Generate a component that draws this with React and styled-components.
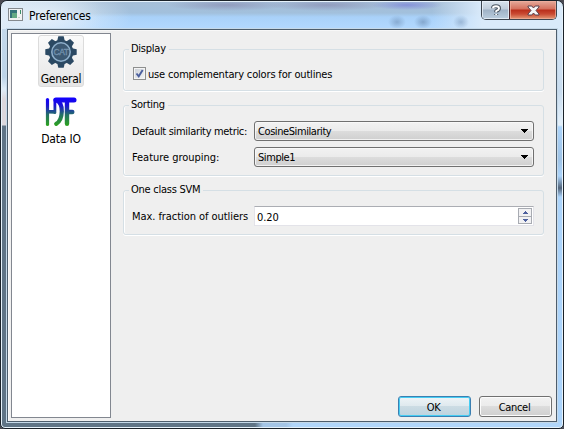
import React from 'react';
import styled, { createGlobalStyle, css } from 'styled-components';

const Global = createGlobalStyle`
  * { box-sizing: border-box; }
  body { margin: 0; background: #4a4a52; overflow: hidden; }
  button { font: inherit; color: inherit; padding: 0; margin: 0; }
`;

const Window = styled.div`
  width: 564px;
  height: 429px;
  display: flex;
  flex-direction: column;
  padding: 0 6px 6px 6px;
  font: 11px/14px 'DejaVu Sans Condensed', 'DejaVu Sans', sans-serif;
  font-stretch: condensed;
  letter-spacing: -0.2px;
  color: #000;
  border: 1px solid #1b2229;
  border-radius: 7px 7px 5px 5px;
  box-shadow: inset 0 0 0 1px #e6f2fb;
  background:
    linear-gradient(90deg, #5f7486 0 254px, #a4c5e6 262px, #a4c5e6 285px, #b1d6fa 292px) 0 100% / 100% 6px no-repeat,
    linear-gradient(180deg, #c9dced 0, #bdd4e8 76px, #dfedf8 88px, #dcd8dd 98px, #dcd8dd 124px, #5f7486 125px) 0 0 / 7px 100% no-repeat,
    linear-gradient(180deg, #dcecfb 0, #c8dcef 90px, #e4f0fa 124px, #acd4fb 126px, #9fc3e6 158px, #acd4fb 175px, #52647a 187px, #acd4fb 196px) 100% 0 / 7px 100% no-repeat,
    #b1d6fa;
`;

const TitleBar = styled.header`
  height: 28px;
  flex: none;
  display: flex;
  align-items: flex-start;
  margin: 0 -5px;
  padding-left: 6px;
  border-top: 1px solid #e6f2fb;
  border-radius: 6px 6px 0 0;
  background:
    radial-gradient(ellipse 85px 30px at 45px 14px, #eaf3fbd9, #eaf3fb00),
    radial-gradient(ellipse 36px 5px at 405px 3px, #777ed8b0, #777ed800),
    radial-gradient(ellipse 9px 7px at 395px 20px, #6989af88, #6989af00),
    radial-gradient(ellipse 9px 7px at 421px 20px, #6989af99, #6989af00),
    radial-gradient(ellipse 8px 7px at 459px 20px, #6989af77, #6989af00),
    radial-gradient(ellipse 60px 6px at 225px 3px, #817fa88c, #817fa800),
    radial-gradient(ellipse 60px 6px at 325px 3px, #817fa88c, #817fa800),
    linear-gradient(90deg, #d8e7f4 0, transparent 100px, transparent 430px, #d9eafa 480px),
    linear-gradient(180deg, #a6bfd8 0, #a2c0dc 11px, #a9d1f9 15px, #b2d8fe 27px);
`;

const Title = styled.h1`
  flex: 1;
  margin: 7px 0 0 6px;
  font-size: 12px;
  font-weight: 400;
  line-height: 14px;
  letter-spacing: -0.15px;
`;

const AppIcon = styled.svg`
  width: 15px;
  height: 13px;
  margin-top: 6px;
`;

const CaptionButtons = styled.div`
  display: flex;
  height: 19px;
  margin: -1px 5px 0 0;
  border: 1px solid #3d4650;
  border-top: 0;
  border-radius: 0 0 5px 5px;
  overflow: hidden;
`;

const CaptionButton = styled.button`
  width: ${p => (p.$close ? 47 : 27)}px;
  border: 0;
  display: grid;
  place-items: center;
  box-shadow: inset 0 0 0 1px ${p => (p.$close ? '#f0b1a0b0' : '#eef5fbc0')};
  background: ${p => p.$close
    ? 'linear-gradient(#e5aa9b 0, #d5705d 8px, #b92e1b 9px, #c94a33 13px, #de8a69 17px)'
    : 'linear-gradient(#d9e4ee 0, #c0cddb 8px, #9fb2c6 9px, #b8cbdc 17px)'};
  & + & { border-left: 1px solid #4b2025; }
`;

const Client = styled.main`
  flex: 1;
  min-height: 0;
  display: flex;
  gap: 12px;
  margin: 0;
  padding: 3px;
  border: 1px solid #4d5d6c;
  background: #efefef;
  box-shadow: inset 1px 1px 0 #f8f8f8, 0 0 0 1px #c5d9e9;
`;

const PageList = styled.nav`
  width: 100px;
  height: 385px;
  flex: none;
  border: 1px solid #828790;
  background: #fff;
  display: flex;
  flex-direction: column;
  align-items: center;
  padding: 1px 0 0 0;
  gap: 8px;
`;

const PageItem = styled.button`
  width: 46px;
  height: 52px;
  border: 1px solid ${p => (p.$selected ? '#dcdcdc' : 'transparent')};
  border-radius: 3px;
  background: ${p => (p.$selected ? 'linear-gradient(#fafafa, #e6e6e6)' : 'none')};
  display: flex;
  flex-direction: column;
  align-items: center;
  gap: 4px;
  font-size: 12px;
  letter-spacing: ${p => p.$spacing}px;
  white-space: nowrap;
  svg { flex: none; }
`;

const Content = styled.section`
  flex: 1;
  display: flex;
  flex-direction: column;
  padding: 9px 9px 0 0;
`;

const Group = styled.fieldset`
  margin: 0 0 ${p => p.$gap}px;
  min-width: 0;
  height: ${p => p.$height}px;
  border: 1px solid #d5dfe5;
  border-radius: 3px;
  padding: ${p => p.$top}px 8px 0 8px;
  box-shadow: inset 1px 0 0 #fff, 0 1px 0 #fff;
`;

const GroupTitle = styled.legend`
  padding: 0 3px 0 2px;
  margin-left: -3px;
  height: 14px;
  letter-spacing: -0.25px;
`;

const CheckRow = styled.label`
  display: flex;
  align-items: center;
  gap: 2px;
  white-space: nowrap;
  letter-spacing: -0.17px;
`;

const CheckText = styled.span`
  padding-top: 2px;
  margin-bottom: -1px;
`;

const CheckBox = styled.span`
  width: 13px;
  height: 13px;
  margin-left: 1px;
  border: 1px solid #8e8f8f;
  background: linear-gradient(135deg, #c9ced6, #f6f6f6);
  box-shadow: inset 0 0 0 1px #f4f4f4;
  display: grid;
  place-items: center;
`;

const Form = styled.div`
  display: grid;
  grid-template-columns: 122px 280px;
  row-gap: 6px;
  align-items: center;
`;

const Label = styled.span`
  white-space: nowrap;
  padding-top: 1px;
  letter-spacing: ${p => p.$spacing}px;
`;

const field = css`
  height: 20px;
  display: flex;
  align-items: center;
`;

const Combo = styled.button`
  ${field}
  justify-content: space-between;
  padding: 0 5px 0 3px;
  letter-spacing: -0.42px;
  border: 1px solid #707070;
  border-radius: 3px;
  background: linear-gradient(#f2f2f2 0, #ebebeb 9px, #dddddd 9px, #cfcfcf 18px);
  box-shadow: inset 0 0 0 1px #fafafacc;
`;

const ComboText = styled.span`
  padding-top: 1px;
`;

const Spin = styled.div`
  ${field}
  justify-content: space-between;
  padding: 0 1px 0 2px;
  border: 1px solid #e3e3e9;
  border-top-color: #abadb3;
  background: #fff;
`;

const SpinValue = styled.span`
  padding-top: 3px;
  letter-spacing: -0.1px;
`;

const Arrows = styled.div`
  width: 14px;
  height: 16px;
  display: grid;
  grid-template-rows: 1fr 1fr;
  border: 1px solid #a8abb2;
  background: #f1f1f3;
`;

const Arrow = styled.span`
  display: grid;
  place-items: center;
  & + & { border-top: 1px solid #a8abb2; }
`;

const Footer = styled.footer`
  display: flex;
  justify-content: flex-end;
  gap: 8px;
  margin: auto -8px 1px 0;
`;

const PushButton = styled.button`
  width: 73px;
  height: 21px;
  padding: 2px 2px 0 0;
  letter-spacing: -0.3px;
  border: 1px solid ${p => (p.$primary ? '#3c7fb1' : '#707070')};
  border-radius: 3px;
  background: ${p => p.$primary
    ? 'linear-gradient(#eef4f7 0, #dfe9ee 9px, #ccdce4 9px, #bdd3df 19px)'
    : 'linear-gradient(#f2f2f2 0, #ebebeb 9px, #dddddd 9px, #cfcfcf 19px)'};
  box-shadow: inset 0 0 0 1px ${p => (p.$primary ? '#46cdf3' : '#fcfcfc')};
`;

function DropArrow() {
  return <svg width="7" height="4" shapeRendering="crispEdges"><path d="M0 0h7v1H6v1H5v1H4v1H3V3H2V2H1V1H0z" /></svg>;
}

function GearIcon() {
  const teeth = [0, 45, 90, 135, 180, 225, 270, 315];
  return (
    <svg width="32" height="32" viewBox="0 0 32 32">
      <circle cx="16" cy="16" r="12.3" fill="#2b4963" />
      {teeth.map(a => <path key={a} d="M12.2 5 13.3.3h5.4L19.8 5z" fill="#2b4963" transform={`rotate(${a} 16 16)`} />)}
      <circle cx="16" cy="16" r="9.2" fill="#3c5973" stroke="#8fb0cc" strokeWidth="1.5" />
      <text x="16" y="19.2" textAnchor="middle" fontSize="8.5" fontFamily="Liberation Sans, sans-serif" letterSpacing="-.5" fill="#6485a2" stroke="#7896b1" strokeWidth=".35">CAT</text>
    </svg>
  );
}

function HdfIcon() {
  return (
    <svg width="32" height="32" viewBox="0 0 32 32">
      <defs>
        <linearGradient id="hdf" gradientUnits="userSpaceOnUse" x1="0" y1="2" x2="0" y2="30">
          <stop offset="0" stopColor="#1200ff" />
          <stop offset=".25" stopColor="#1a10d8" />
          <stop offset=".6" stopColor="#237066" />
          <stop offset="1" stopColor="#2da51b" />
        </linearGradient>
      </defs>
      <g fill="none" stroke="url(#hdf)" strokeLinecap="round" strokeLinejoin="round">
        <path d="M2.5 3.5V28.5" strokeWidth="3.2" />
        <path d="M3 15.8 10 15.9" strokeWidth="3.6" strokeLinecap="butt" />
        <path d="M9.9 3.7v13" strokeWidth="2.8" />
        <path d="M12 4.5Q17 7 16.8 15.5 16.5 25 11.2 27.8" strokeWidth="4.2" />
        <path d="M10.9 4.1H29" strokeWidth="5" />
        <path d="M22 5V27.8" strokeWidth="4.4" />
        <path d="M22 16H27.3" strokeWidth="4.4" />
      </g>
    </svg>
  );
}

export default function App() {
  return (
    <>
      <Global />
      <Window>
        <TitleBar>
          <AppIcon viewBox="0 0 15 13" shapeRendering="crispEdges">
            <path fill="#858a8e" d="M0 0h15v13H0z" />
            <path fill="#f1f3f3" d="M1 1h13v11H1z" />
            <path fill="#35747b" d="M2 2h7v8H2z" />
            <path fill="#64aa84" d="M4 5h5v5H4z" />
            <path fill="#c7cecb" d="M10 9h2v1h-2z" />
            <path fill="#3c9069" d="M12 2h1v4h-1z" />
          </AppIcon>
          <Title>Preferences</Title>
          <CaptionButtons>
            <CaptionButton aria-label="Help">
              <svg width="12" height="13" viewBox="0 0 12 13">
                <g fill="none" strokeLinejoin="round">
                  <path d="M3 4.2Q3 2.3 6 2.3 9 2.3 9 4.4 9 5.8 6.2 7v1.3M6.2 10v1" stroke="#4d5864" strokeWidth="4" />
                  <path d="M3 4.2Q3 2.3 6 2.3 9 2.3 9 4.4 9 5.8 6.2 7v1.3M6.2 10v1" stroke="#fff" strokeWidth="1.9" />
                </g>
              </svg>
            </CaptionButton>
            <CaptionButton $close aria-label="Close">
              <svg width="13" height="11" viewBox="0 0 13 11">
                <path d="M1 1h3.8l1.7 2L8.2 1H12v1L9 5.5l3 3.5v1H8.2L6.5 8l-1.7 2H1V9l3-3.5L1 2z" fill="#f5f5f5" stroke="#593f4b" />
              </svg>
            </CaptionButton>
          </CaptionButtons>
        </TitleBar>
        <Client>
          <PageList>
            <PageItem $selected $spacing={-0.3}><GearIcon />General</PageItem>
            <PageItem $spacing={-0.2}><HdfIcon />Data IO</PageItem>
          </PageList>
          <Content>
            <Group $height={49} $gap={7} $top={10}>
              <GroupTitle>Display</GroupTitle>
              <CheckRow>
                <CheckBox>
                  <svg width="9" height="9"><path d="M1.5 4.5 3.7 7.3 7.7 1" fill="none" stroke="#4b5f9e" strokeWidth="1.9" /></svg>
                </CheckBox>
                <CheckText>use complementary colors for outlines</CheckText>
              </CheckRow>
            </Group>
            <Group $height={78} $gap={7} $top={9}>
              <GroupTitle>Sorting</GroupTitle>
              <Form>
                <Label $spacing={-0.32}>Default similarity metric:</Label>
                <Combo><ComboText>CosineSimilarity</ComboText><DropArrow /></Combo>
                <Label $spacing={-0.03}>Feature grouping:</Label>
                <Combo><ComboText>Simple1</ComboText><DropArrow /></Combo>
              </Form>
            </Group>
            <Group $height={52} $gap={0} $top={9}>
              <GroupTitle>One class SVM</GroupTitle>
              <Form>
                <Label $spacing={-0.06}>Max. fraction of outliers</Label>
                <Spin>
                  <SpinValue>0.20</SpinValue>
                  <Arrows>
                    <Arrow><svg width="5" height="3" shapeRendering="crispEdges"><path d="M2 0h1v1h1v1h1v1H0V2h1V1h1z" fill="#4c5f9e" /></svg></Arrow>
                    <Arrow><svg width="5" height="3" shapeRendering="crispEdges"><path d="M0 0h5v1H4v1H3v1H2V2H1V1H0z" fill="#4c5f9e" /></svg></Arrow>
                  </Arrows>
                </Spin>
              </Form>
            </Group>
            <Footer>
              <PushButton $primary>OK</PushButton>
              <PushButton>Cancel</PushButton>
            </Footer>
          </Content>
        </Client>
      </Window>
    </>
  );
}
